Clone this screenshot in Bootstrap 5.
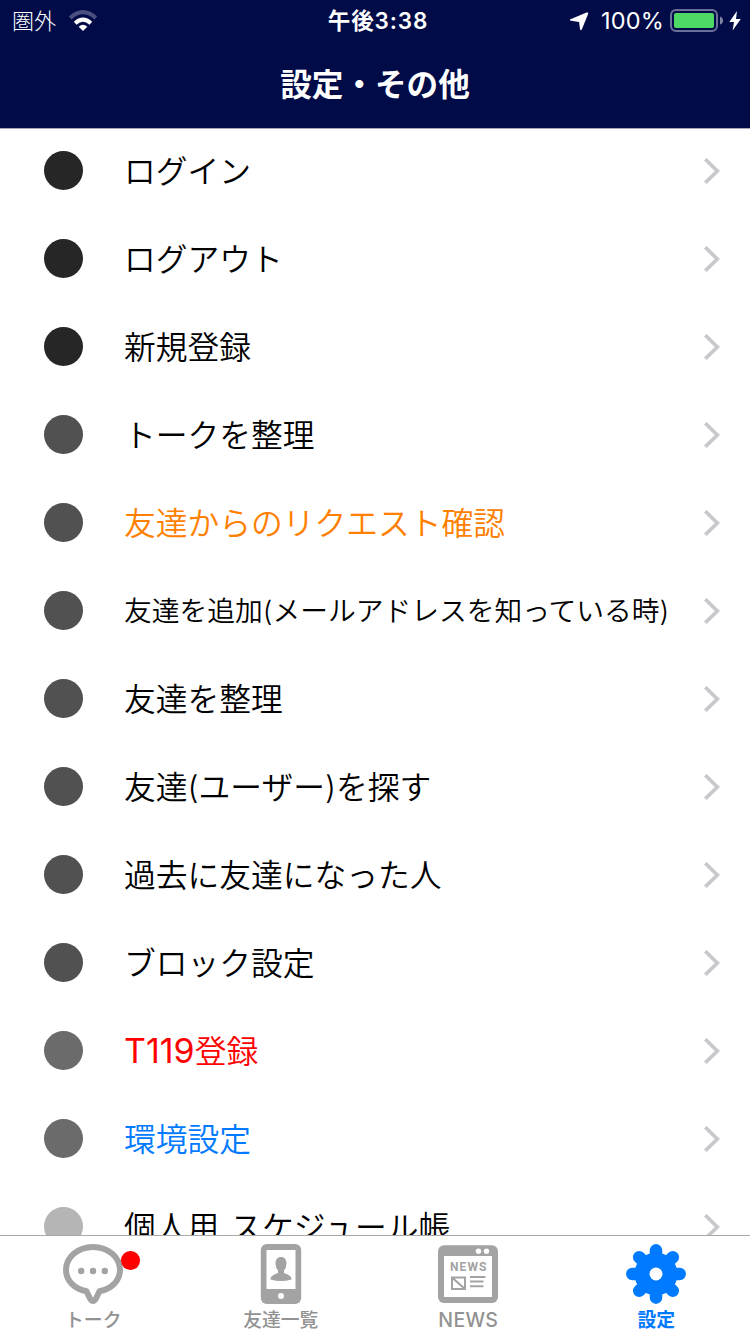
<!DOCTYPE html>
<html lang="ja">
<head>
<meta charset="utf-8">
<meta name="viewport" content="width=device-width, initial-scale=1">
<title>設定・その他</title>
<link href="https://cdn.jsdelivr.net/npm/bootstrap@5.3.0/dist/css/bootstrap.min.css" rel="stylesheet">
<style>
  body { font-family: Inter, "Noto Sans CJK JP", sans-serif; color: #000; height: 1334px; }
  svg { display: block; flex: none; }
  .topbar { background: #000b48; height: 129px; border-bottom: 1px solid #a7a7b4; z-index: 2; }
  .statusbar { height: 41px; padding: 0 9px 0 12px; font-size: 22px; line-height: 40px; }
  .statusbar > div { flex: 1 1 0; }
  .status-time { font-weight: 600; font-size: 22.5px; letter-spacing: .85px; padding-left: 3px; }
  .status-pct { font-size: 23.5px; margin: 0 6px 0 12px; letter-spacing: .2px; }
  .status-batt { margin-right: 5px; }
  .page-title { font-size: 31.6px; font-weight: 700; line-height: 87px; height: 87px; }
  .menu-list { margin-top: -2px; min-height: 0; }
  .menu-row { height: 88px; padding: 0 30px 0 44px; color: #000; font-size: 31.75px; line-height: 85px; font-weight: 350; flex: none; word-spacing: 2px; }
  .menu-label { padding-top: 1px; }
  .dot { width: 39px; height: 39px; border-radius: 50%; margin: 0 41px 1px 0; flex: none; }
  .dot-1 { background: #262626; }
  .dot-2 { background: #515151; }
  .dot-3 { background: #6b6b6b; }
  .dot-4 { background: #b5b5b5; }
  .row-long { font-size: 27.75px; }
  .c-orange { color: #ff8000; }
  .c-red { color: #f00; }
  .c-blue { color: #007aff; }
  .latin { font-size: 34px; font-weight: 400; line-height: 1; }
  .tabbar { height: 99px; border-top: 1px solid #a9a9a9; z-index: 2; }
  .tab { color: #929292; font-size: 18.8px; font-weight: 500; line-height: 28px; padding: 8px 1px 0 0; }
  .tab.active { color: #007aff; font-weight: 700; padding-right: 0; }
  .tab-label { margin-top: 3px; }
  .tab-label-latin { font-size: 19.5px; margin-top: 2px; letter-spacing: .3px; }
  .alert-dot { width: 18.500px; height: 18.500px; left: 58px; top: 7px; background: #f00; }
</style>
</head>
<body class="d-flex flex-column overflow-hidden bg-white">
<header class="topbar text-white position-relative flex-shrink-0">
  <div class="statusbar d-flex align-items-center">
    <div class="d-flex align-items-center gap-2">
      <span class="fw-light">圏外</span>
      <svg width="30" height="22" viewBox="0 0 30 22" style="margin-left:4px">
        <g fill="none" stroke="#fff" stroke-width="4"><path stroke="#4a5180" d="M2.200 7.900Q15-3.500 27.800 7.900"/><path d="M7.200 13.200Q15 6.200 22.800 13.200"/></g>
        <path fill="#fff" d="M10.700 16.700Q15 13 19.300 16.700L15 20.900Z"/>
      </svg>
    </div>
    <div class="status-time text-center text-nowrap">午後3:38</div>
    <div class="d-flex align-items-center justify-content-end">
      <svg width="20" height="20" viewBox="0 0 20 20"><path fill="#fff" d="M1.500 8.300 17.500 1.600Q19.800.800 19 3.300L12.800 18.500Q11.600 20.300 11 18L10.100 11 2 9.800Q0 9.200 1.500 8.300Z"/></svg>
      <span class="status-pct">100%</span>
      <svg width="54" height="24" viewBox="0 0 54 24" class="status-batt"><rect x="1" y="1" width="46" height="21" rx="5" fill="none" stroke="#6b7099" stroke-width="2"/><rect x="4" y="4" width="40" height="15" rx="2" fill="#4cd964"/><path fill="#8085a6" d="M50 7.500Q53 8.500 53 11.500T50 15.500Z"/></svg>
      <svg width="12" height="20" viewBox="0 0 12 20"><path fill="#fff" d="M8 0 .300 11H5L3.600 19.600 11.800 8H7Z"/></svg>
    </div>
  </div>
  <div class="page-title text-center">設定・その他</div>
</header>

<main class="menu-list d-flex flex-column flex-grow-1 overflow-hidden" id="menu"></main>

<nav class="tabbar d-flex bg-white position-relative flex-shrink-0">
  <div class="tab col-3 d-flex flex-column align-items-center">
    <div class="position-relative">
      <svg width="60" height="60" viewBox="0 0 60 60"><path fill="none" stroke="#a3a3a3" stroke-width="6" stroke-linejoin="round" d="M30 3C14.500 3 3 13.500 3 26C3 36.500 11 44.500 23.500 47.300L27 54.500Q30 59.500 33 54.500L36.500 47.300C49 44.500 57 36.500 57 26C57 13.500 45.500 3 30 3Z"/><g fill="#a3a3a3"><circle cx="18.200" cy="27" r="3.200"/><circle cx="30" cy="27" r="3.200"/><circle cx="41.800" cy="27" r="3.200"/></g></svg>
      <span class="alert-dot position-absolute rounded-circle"></span>
    </div>
    <div class="tab-label">トーク</div>
  </div>
  <div class="tab col-3 d-flex flex-column align-items-center">
    <svg width="42" height="60" viewBox="0 0 42 60"><rect x=".8" width="40.400" height="60" rx="6" fill="#a3a3a3"/><path fill="#fff" d="M6.500 6H35.500V45H6.500Z"/><circle cx="21" cy="52" r="3" fill="#fff"/><path fill="#a3a3a3" d="M21 13C24.500 13 26.500 15.500 26.500 19.500Q26.300 24 24 26.500V29C29 31 31.500 32 31.500 35.500Q21 38.500 10.500 35.500C10.500 32 13 31 18 29V26.500Q15.700 24 15.500 19.500C15.500 15.500 17.500 13 21 13Z"/></svg>
    <div class="tab-label">友達一覧</div>
  </div>
  <div class="tab col-3 d-flex flex-column align-items-center">
    <svg width="60" height="60" viewBox="0 0 60 60"><rect y="1.200" width="60" height="57.800" rx="6" fill="#a3a3a3"/><path fill="#fff" d="M6 12H54V53H6Z"/><circle cx="40.500" cy="7.200" r="2.700" fill="#fff"/><circle cx="48.500" cy="7.200" r="2.700" fill="#fff"/><text x="12" y="27" font-family="Roboto, sans-serif" font-size="12" font-weight="700" textLength="36.500" fill="#a3a3a3">NEWS</text><path fill="none" stroke="#a3a3a3" stroke-width="2" d="M14 33.500H27V45H14ZM14 33.500 27 45M32 33H47.500M32 37.500H45.500M32 42.300H45.500"/></svg>
    <div class="tab-label tab-label-latin">NEWS</div>
  </div>
  <div class="tab active col-3 d-flex flex-column align-items-center">
    <svg width="60" height="60" viewBox="-30 -30 60 60"><g stroke="#007aff" stroke-width="12.500" stroke-linecap="round"><path d="M0-23.700V23.700M-23.700 0H23.700M-16.800-16.800 16.800 16.800M16.800-16.800-16.800 16.800"/></g><circle r="21.500" fill="#007aff"/><circle r="6.500" fill="#fff"/></svg>
    <div class="tab-label">設定</div>
  </div>
</nav>

<script src="https://cdn.jsdelivr.net/npm/bootstrap@5.3.0/dist/js/bootstrap.bundle.min.js"></script>
<script>
  const rows = [
    ['ログイン', 'dot-1', ''],
    ['ログアウト', 'dot-1', ''],
    ['新規登録', 'dot-1', ''],
    ['トークを整理', 'dot-2', ''],
    ['友達からのリクエスト確認', 'dot-2', 'c-orange'],
    ['友達を追加(メールアドレスを知っている時)', 'dot-2', 'row-long'],
    ['友達を整理', 'dot-2', ''],
    ['友達(ユーザー)を探す', 'dot-2', ''],
    ['過去に友達になった人', 'dot-2', ''],
    ['ブロック設定', 'dot-2', ''],
    ['<span class="latin">T119</span>登録', 'dot-3', 'c-red'],
    ['環境設定', 'dot-3', 'c-blue'],
    ['個人用 スケジュール帳', 'dot-4', '']
  ];
  document.getElementById('menu').innerHTML = rows.map(([label, dot, tone]) => `
    <div class="menu-row d-flex align-items-center">
      <span class="dot ${dot}"></span>
      <span class="menu-label flex-grow-1 text-nowrap ${tone}">${label}</span>
      <svg width="16" height="26" viewBox="0 0 16 26"><path fill="none" stroke="#c7c7cc" stroke-width="3.700" d="M1.300 1.300 13.300 13 1.300 24.700"/></svg>
    </div>`).join('');
</script>
</body>
</html>
